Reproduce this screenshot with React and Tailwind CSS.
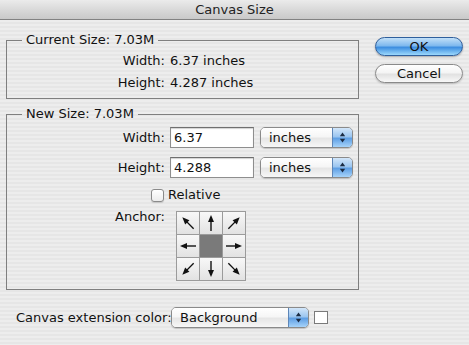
import React from 'react';

const FONT = { fontFamily: '"DejaVu Sans", "Lucida Grande", Verdana, sans-serif' };

// angle in degrees, 0 = pointing up
const ANCHOR = [
  { a: -45 }, { a: 0 }, { a: 45 },
  { a: -90 }, { center: true }, { a: 90 },
  { a: -135 }, { a: 180 }, { a: 135 },
];

function Arrow({ angle }) {
  return (
    <svg width="22" height="22" viewBox="0 0 22 22">
      <g transform={`rotate(${angle} 11 11)`}>
        <line x1="11" y1="19" x2="11" y2="8" stroke="#111" strokeWidth="1.4" />
        <polygon points="11,3 8,10 14,10" fill="#111" />
      </g>
    </svg>
  );
}

function Steppers() {
  return (
    <svg width="7" height="11" viewBox="0 0 7 11">
      <polygon points="3.5,0.5 0.8,4.2 6.2,4.2" fill="#1c2c44" />
      <polygon points="3.5,10.5 0.8,6.8 6.2,6.8" fill="#1c2c44" />
    </svg>
  );
}

function Popup({ label, width }) {
  return (
    <div
      className="flex h-[21px] rounded-[5px] border border-[#8a8a8a] overflow-hidden shadow-[0_1px_1px_rgba(0,0,0,0.18)]"
      style={{ width }}
    >
      <div className="flex-1 flex items-center pl-[8px] text-[13px] leading-[16px] text-[#111] bg-[linear-gradient(#ffffff,#f6f6f6_45%,#e6e6e6_55%,#f7f7f7)]">
        {label}
      </div>
      <div className="w-[20px] flex items-center justify-center border-l border-[#5d86b8] bg-[linear-gradient(#d2e6fa,#9cc6f0_45%,#5f9fe4_55%,#a6d3fa)]">
        <Steppers />
      </div>
    </div>
  );
}

function TextField({ value }) {
  return (
    <div className="w-[84px] h-[21px] bg-white border border-[#8e8e8e] border-t-[#6f6f6f] shadow-[inset_0_1px_1px_rgba(0,0,0,0.18)] flex items-center pl-[3px] text-[13px] leading-[16px] text-[#111]">
      {value}
    </div>
  );
}

export default function App() {
  return (
    <div
      style={FONT}
      className="w-[469px] h-[345px] overflow-hidden text-[#111] bg-[repeating-linear-gradient(180deg,#ededed_0px,#ededed_2px,#e6e6e6_2px,#e6e6e6_4px)]"
    >
      <div className="h-[20px] flex items-center justify-center border-b border-[#828282] bg-[linear-gradient(#ebebeb,#d6d6d6_60%,#c9c9c9)] text-[13px] leading-[16px] text-[#222]">
        Canvas Size
      </div>

      <div className="flex px-[6px]">
        <div className="w-[356px]">
          <fieldset className="mt-[12px] border border-[#7f7f7f] pt-[5px] pb-[7px]">
            <legend className="ml-[15px] px-[4px] text-[13px] leading-[16px]">Current Size: 7.03M</legend>
            <div className="grid grid-cols-[158px_auto] gap-x-[5px] gap-y-[6px] text-[13px] leading-[16px]">
              <div className="text-right">Width:</div>
              <div>6.37 inches</div>
              <div className="text-right">Height:</div>
              <div>4.287 inches</div>
            </div>
          </fieldset>

          <fieldset className="mt-[7px] border border-[#7f7f7f] pt-[5px] pb-[8px]">
            <legend className="ml-[15px] px-[4px] text-[13px] leading-[16px]">New Size: 7.03M</legend>
            <div className="flex flex-col text-[13px] leading-[16px]">
              <div className="flex items-center gap-[5px]">
                <div className="w-[158px] text-right">Width:</div>
                <TextField value="6.37" />
                <div className="ml-[1px]">
                  <Popup label="inches" width={93} />
                </div>
              </div>
              <div className="flex items-center gap-[5px] mt-[9px]">
                <div className="w-[158px] text-right">Height:</div>
                <TextField value="4.288" />
                <div className="ml-[1px]">
                  <Popup label="inches" width={93} />
                </div>
              </div>
              <div className="flex items-center mt-[9px] pl-[144px] gap-[4px]">
                <div className="w-[13px] h-[13px] rounded-[3px] border border-[#8a8a8a] bg-[linear-gradient(#ffffff,#ececec)] shadow-[0_1px_1px_rgba(0,0,0,0.15)]" />
                <span>Relative</span>
              </div>
              <div className="flex items-start mt-[6px] gap-[11px]">
                <div className="w-[158px] text-right">Anchor:</div>
                <div className="mt-[2px] grid grid-cols-[22px_22px_22px] gap-px p-px bg-[#9b9b9b]">
                  {ANCHOR.map((c, i) =>
                    c.center ? (
                      <div key={i} className="w-[22px] h-[22px] bg-[#7a7a7a]" />
                    ) : (
                      <div key={i} className="w-[22px] h-[22px] bg-[linear-gradient(#f8f8f8,#e2e2e2)]">
                        <Arrow angle={c.a} />
                      </div>
                    )
                  )}
                </div>
              </div>
            </div>
          </fieldset>

          <div className="flex items-center mt-[17px] ml-[10px] text-[13px] leading-[16px]">
            <div className="w-[150px] whitespace-nowrap">Canvas extension color:</div>
            <div className="ml-[5px]">
              <Popup label="Background" width={138} />
            </div>
            <div className="ml-[5px] w-[14px] h-[13px] bg-white border border-[#7a7a7a]" />
          </div>
        </div>

        <div className="ml-[16px] mt-[17px] flex flex-col gap-[8px]">
          <button className="w-[88px] h-[19px] rounded-full border border-[#2f5f9c] bg-[linear-gradient(#c2e0f8,#7fb9ee_45%,#3d8ee0_55%,#9bd8fc)] text-[13px] leading-[16px] text-[#111] flex items-center justify-center shadow-[0_1px_2px_rgba(0,0,0,0.3)]">
            OK
          </button>
          <button className="w-[88px] h-[19px] rounded-full border border-[#8a8a8a] bg-[linear-gradient(#ffffff,#f4f4f4_45%,#e2e2e2_55%,#f8f8f8)] text-[13px] leading-[16px] text-[#111] flex items-center justify-center shadow-[0_1px_2px_rgba(0,0,0,0.2)]">
            Cancel
          </button>
        </div>
      </div>
    </div>
  );
}
